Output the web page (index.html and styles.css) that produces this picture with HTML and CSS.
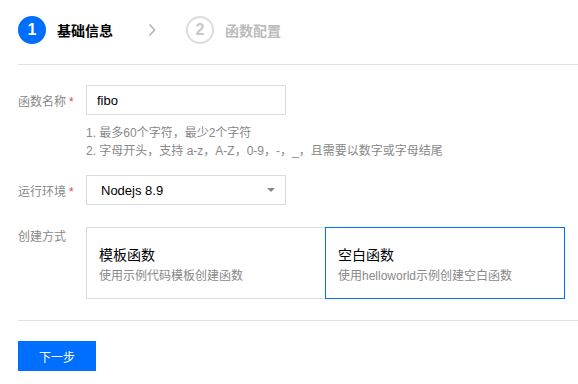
FILE: index.html
```html
<!DOCTYPE html>
<html lang="zh-CN">
<head>
  <meta charset="UTF-8" />
  <meta name="viewport" content="width=device-width, initial-scale=1.0"/>
  <title>新建函数</title>
  <link rel="stylesheet" href="styles.css">
</head>
<body>
  <div class="page">
    <div class="steps">
      <div class="step active">
        <span class="step-num">1</span>
        <span class="step-title">基础信息</span>
      </div>
      <svg class="step-arrow" width="8" height="14" viewBox="0 0 8 14">
        <polyline points="1.5,1.5 6.5,7 1.5,12.5" fill="none" stroke="#b3b3b3" stroke-width="1.6"/>
      </svg>
      <div class="step">
        <span class="step-num">2</span>
        <span class="step-title">函数配置</span>
      </div>
    </div>

    <div class="form">
      <div class="row">
        <label class="label">函数名称<span class="req">*</span></label>
        <input class="input" type="text" value="fibo">
      </div>
      <div class="hints">
        <p>1. 最多60个字符，最少2个字符</p>
        <p>2. 字母开头，支持 a-z，A-Z，0-9，-，_，且需要以数字或字母结尾</p>
      </div>

      <div class="row runtime">
        <label class="label">运行环境<span class="req">*</span></label>
        <div class="select">
          <span>Nodejs 8.9</span>
          <i class="caret"></i>
        </div>
      </div>

      <div class="row create">
        <label class="label top">创建方式</label>
        <div class="cards">
          <div class="card">
            <div class="card-title">模板函数</div>
            <div class="card-desc">使用示例代码模板创建函数</div>
          </div>
          <div class="card selected">
            <div class="card-title">空白函数</div>
            <div class="card-desc">使用helloworld示例创建空白函数</div>
          </div>
        </div>
      </div>
    </div>

    <div class="footer">
      <button class="btn-primary">下一步</button>
    </div>
  </div>
</body>
</html>
```

FILE: styles.css
```css
body {
  margin: 0;
  background: #fff;
  font-family: "Liberation Sans", "Noto Sans CJK SC", sans-serif;
  color: #000;
}
.page {
  padding-left: 18px;
}
.steps {
  display: flex;
  align-items: center;
  padding: 16px 0 20px;
  border-bottom: 1px solid #e2e2e2;
}
.step {
  display: flex;
  align-items: center;
}
.step-num {
  width: 24px;
  height: 24px;
  border: 2px solid #dcdcdc;
  border-radius: 50%;
  display: flex;
  align-items: center;
  justify-content: center;
  font-size: 16px;
  font-weight: bold;
  color: #c8c8c8;
}
.step-title {
  margin-left: 11px;
  font-size: 14px;
  font-weight: bold;
  color: #bbb;
}
.step.active .step-num {
  background: #006eff;
  border-color: #006eff;
  color: #fff;
}
.step.active .step-title {
  color: #000;
}
.step-arrow {
  margin: 0 30px 0 35px;
}
.form {
  margin-top: 20px;
}
.row {
  display: flex;
  align-items: center;
}
.label {
  width: 68px;
  flex-shrink: 0;
  font-size: 12px;
  color: #888;
}
.label.top {
  align-self: flex-start;
  line-height: 20px;
}
.req {
  color: #e54545;
  margin-left: 3px;
}
.input {
  box-sizing: border-box;
  width: 200px;
  height: 30px;
  border: 1px solid #dcdcdc;
  padding: 0 10px;
  font-family: inherit;
  font-size: 13px;
  color: #000;
  outline: none;
}
.hints {
  margin: 9px 0 0 68px;
  font-size: 12px;
  line-height: 18px;
  color: #888;
}
.hints p {
  margin: 0;
}
.runtime {
  margin-top: 15px;
}
.select {
  box-sizing: border-box;
  width: 200px;
  height: 30px;
  border: 1px solid #dcdcdc;
  padding: 0 10px 0 14px;
  display: flex;
  align-items: center;
  justify-content: space-between;
  font-size: 13px;
}
.caret {
  width: 0;
  height: 0;
  border-top: 4px solid #888;
  border-left: 4px solid transparent;
  border-right: 4px solid transparent;
}
.create {
  margin-top: 22px;
}
.cards {
  display: flex;
}
.card {
  box-sizing: border-box;
  width: 240px;
  height: 72px;
  border: 1px solid #dcdcdc;
  padding: 17px 12px 0;
}
.card.selected {
  border-color: #006eff;
  margin-left: -1px;
}
.card-title {
  font-size: 14px;
  line-height: 20px;
  color: #000;
}
.card-desc {
  margin-top: 2px;
  font-size: 12px;
  line-height: 18px;
  color: #888;
}
.footer {
  margin-top: 21px;
  border-top: 1px solid #e2e2e2;
  padding-top: 20px;
}
.btn-primary {
  width: 78px;
  height: 30px;
  border: none;
  background: #006eff;
  color: #fff;
  font-family: inherit;
  font-size: 12px;
  cursor: pointer;
}
```
